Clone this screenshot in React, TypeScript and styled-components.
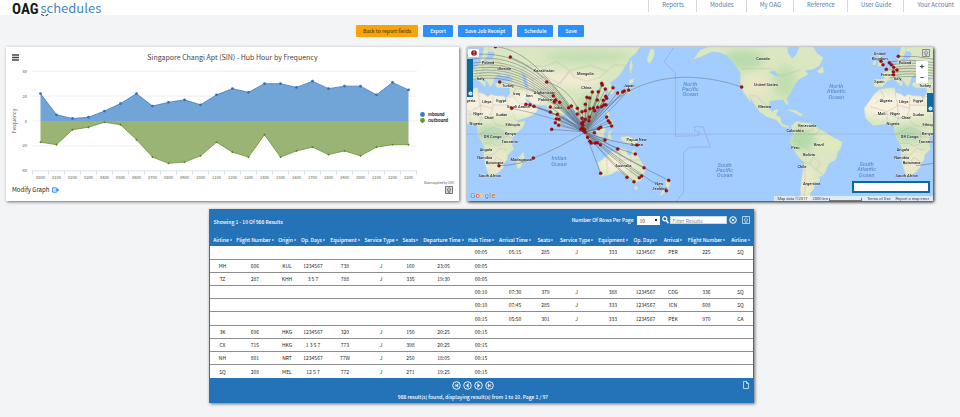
import React from "react";
import styled, { createGlobalStyle, css } from "styled-components";

const GlobalStyle = createGlobalStyle`
  * { box-sizing: border-box; }
  body {
    margin: 0;
    background: #f2f4f6;
    color: #333;
    font-family: "Noto Sans CJK SC", "Noto Sans", sans-serif;
    font-size: 6px;
    line-height: 8px;
  }
  button, input, select { font: inherit; margin: 0; }
`;

/* ---------- header ---------- */

const Header = styled.header`
  display: flex;
  justify-content: space-between;
  height: 15px;
  background: #fff;
`;

const Logo = styled.a`
  position: relative;
  display: flex;
  align-items: flex-start;
  gap: 2px;
  height: 18px;
  padding-left: 12px;
  text-decoration: none;
`;

const Brand = styled.span`
  color: #111c18;
  font: bold 15px/18px "Liberation Sans Narrow", "Roboto Condensed", "DejaVu Sans Condensed", sans-serif;
`;

const Product = styled.span`
  color: #3f86c6;
  font-size: 13px;
  line-height: 15px;
  font-weight: 400;
`;

const LogoMark = styled.svg`
  position: absolute;
  left: 40px;
  top: 14px;
`;

const Nav = styled.nav`
  display: flex;
  height: 12px;
  padding-right: 6px;
`;

const NavLink = styled.a`
  padding: 0 12px 0 13px;
  border-left: 1px solid #d3d6da;
  color: #5878a8;
  font-size: 6px;
  line-height: 9px;
  text-decoration: none;
  white-space: nowrap;
  &:last-child { padding-right: 0; }
`;

/* ---------- toolbar ---------- */

const Toolbar = styled.div`
  display: flex;
  justify-content: center;
  gap: 5px;
  padding: 10px 20px 10px 0;
`;

const ActionButton = styled.button<{ $back?: boolean }>`
  height: 12px;
  padding: 0 7px;
  border: 0;
  border-radius: 1px;
  background: ${(p) => (p.$back ? "#f8a408" : "#2b90fb")};
  color: ${(p) => (p.$back ? "#5a4210" : "#fff")};
  font-size: 5px;
  line-height: 12px;
  font-weight: 500;
  white-space: nowrap;
`;

/* ---------- panels ---------- */

const Panels = styled.main`
  display: grid;
  grid-template-columns: 453fr 466fr;
  gap: 8px;
  padding: 0 27px 0 6px;
`;

const Panel = styled.section`
  position: relative;
  background: #fff;
  box-shadow: 1px 1px 3px rgba(0, 0, 0, 0.55);
`;

const PanelHead = styled.div`
  display: grid;
  grid-template-columns: 7px 1fr 7px;
  align-items: center;
  padding: 3px 6px 0;
  height: 17px;
`;

const IconButton = styled.button`
  display: grid;
  place-items: center;
  padding: 0;
  border: 0;
  background: none;
  color: inherit;
`;

const ChartTitle = styled.h2`
  margin: 0;
  color: #444;
  font-size: 7px;
  line-height: 12px;
  font-weight: 400;
  text-align: center;
`;

const Drawing = styled.svg`
  display: block;
  width: 100%;
`;

const AxisText = styled.text<{ $end?: boolean; $mid?: boolean }>`
  fill: #555;
  font-size: 4px;
  text-anchor: ${(p) => (p.$end ? "end" : p.$mid ? "middle" : "start")};
`;

const LegendText = styled.text`
  fill: #222;
  font-size: 4px;
  font-weight: 700;
`;

const PanelFoot = styled.div`
  display: flex;
  justify-content: space-between;
  align-items: center;
  height: 13px;
  padding: 0 6px 9px;
`;

const ModifyLink = styled.a`
  display: flex;
  align-items: center;
  gap: 3px;
  color: #222;
  font-size: 6px;
  text-decoration: none;
`;

const INBOUND = [22, 5, 2, 3, 8, 14, 22, 12, 15, 17, 13, 21, 26, 23, 30, 30, 27, 32, 26, 28, 28, 21, 31, 25];
const OUTBOUND = [-17, -19, -7, -5, -1, -3, -15, -29, -34, -33, -28, -17, -25, -29, -11, -29, -24, -21, -27, -24, -28, -21, -19, -19];
const px = (i: number) => 34.5 + i * 16;
const py = (v: number) => 57 - v * 1.245;
const line = (d: number[]) => d.map((v, i) => `${px(i)},${py(v)}`).join(" ");

function Chart() {
  return (
    <Drawing viewBox="0 0 453 124" role="img" aria-label="Hub hour by frequency">
      {[40, 20, 0, -20, -40].map((v) => (
        <g key={v}>
          <path d={`M26 ${py(v)}H411`} stroke={v === -40 ? "#c0d0e0" : "#e3e3e3"} strokeWidth=".6" />
          <AxisText $end x="21" y={py(v) + 1.5}>{v}</AxisText>
        </g>
      ))}
      {Array.from({ length: 25 }, (_, i) => (
        <path key={i} d={`M${26.5 + i * 16} 106.800v4`} stroke="#c0d0e0" strokeWidth=".6" />
      ))}
      <polygon points={`${px(0)},${py(0)} ${line(INBOUND)} ${px(23)},${py(0)}`} fill="#72a5d7" />
      <polygon points={`${px(0)},${py(0)} ${line(OUTBOUND)} ${px(23)},${py(0)}`} fill="#99b474" />
      <polyline points={line(INBOUND)} fill="none" stroke="#3f7fc0" strokeWidth=".8" />
      <polyline points={line(OUTBOUND)} fill="none" stroke="#6b963b" strokeWidth=".8" />
      {INBOUND.map((v, i) => (
        <circle key={i} cx={px(i)} cy={py(v)} r="1.4" fill="#3472b4" />
      ))}
      {OUTBOUND.map((v, i) => (
        <path key={i} d={`M${px(i)} ${py(v) - 1.2}l1.200 1.200l-1.200 1.200l-1.200-1.200z`} fill="#587f2a" />
      ))}
      {INBOUND.map((_, i) => (
        <AxisText $mid key={i} x={px(i)} y="115">{`${String(i).padStart(2, "0")}00`}</AxisText>
      ))}
      <AxisText $mid transform="translate(10 57) rotate(-90)">
        <tspan fontSize="5">Frequency</tspan>
      </AxisText>
      <circle cx="416.500" cy="50.500" r="2.400" fill="#3a7cc4" />
      <LegendText x="422" y="52">Inbound</LegendText>
      <circle cx="416.500" cy="56.500" r="2.400" fill="#66972b" />
      <LegendText x="422" y="58">Outbound</LegendText>
      <AxisText $end x="448" y="120">
        <tspan fontSize="3">Data supplied by OAG</tspan>
      </AxisText>
    </Drawing>
  );
}

const ExpandIcon = ({ color = "#555", fill = "#ddd" }: { color?: string; fill?: string }) => (
  <svg width="8" height="8" viewBox="0 0 8 8" aria-hidden="true">
    <path d="M.5.5h7v7h-7z" fill={fill} stroke={color} strokeWidth=".8" />
    <path d="M4 1.500L6 3.800H4.900V6.300H3.100V3.800H2z" fill="none" stroke={color} strokeWidth=".7" />
  </svg>
);

/* ---------- map ---------- */

const MapPanel = styled(Panel)`
  background: #a3ccff;
  overflow: hidden;
`;

const MapShadow = styled.div`
  box-shadow: 1px 1px 3px rgba(0, 0, 0, 0.55);
  display: grid;
`;

const Country = styled.text`
  fill: #222;
  stroke: #fff;
  stroke-width: 2px;
  stroke-opacity: 0.5;
  paint-order: stroke;
  font: 500 12px "Roboto", sans-serif;
  text-anchor: middle;
`;

const Ocean = styled.text`
  fill: #5c8fd0;
  font: italic 500 17px "Roboto", sans-serif;
  text-anchor: middle;
`;

const overlay = css`
  position: absolute;
  z-index: 1;
`;

const AlertBadge = styled.button`
  ${overlay}
  top: 2px;
  left: 1px;
  display: grid;
  place-items: center;
  width: 11px;
  height: 8px;
  padding: 0;
  border: 0;
  border-radius: 1px;
  background: #fff;
`;

const SideTab = styled.button<{ $right?: boolean }>`
  ${overlay}
  ${(p) => (p.$right ? "right: 0; top: 46px; height: 19px;" : "left: 0; top: 12px; height: 38px;")}
  display: flex;
  align-items: flex-end;
  justify-content: center;
  width: 6px;
  padding: 0 0 1px;
  border: 0;
  background: #0b6a9f;
`;

const MapExpand = styled(IconButton)`
  ${overlay}
  top: 2px;
  right: 3px;
`;

const ZoomBox = styled.div`
  ${overlay}
  top: 14px;
  right: 5px;
  display: grid;
  border-radius: 1px;
  background: #fff;
`;

const ZoomButton = styled.button`
  width: 12px;
  height: 11px;
  padding: 0;
  border: 0;
  background: none;
  color: #444;
  font: bold 8px/11px "Roboto", sans-serif;
`;

const MapSearch = styled.input`
  ${overlay}
  right: 3px;
  bottom: 8px;
  width: 78px;
  height: 12px;
  border: 1px solid #0b6a9f;
  outline: 1px solid #0b6a9f;
  outline-offset: -2px;
  background: #fff;
`;

const Google = styled.a`
  ${overlay}
  left: 3px;
  bottom: 0;
  font: 500 8px/11px "Roboto", sans-serif;
  text-decoration: none;
  text-shadow: 0 0 1px #fff, 0 0 1px #fff;
`;

const Letter = styled.span<{ $c: string }>`
  color: ${(p) => p.$c};
`;

const Credits = styled.div`
  ${overlay}
  right: 0;
  bottom: 0;
  display: flex;
  gap: 5px;
  height: 5px;
  padding: 0 4px 0 3px;
  background: rgba(245, 245, 245, 0.75);
  color: #444;
  font: 4px/5px "Roboto", sans-serif;
  a { color: inherit; text-decoration: none; }
`;

const Scale = styled.span`
  display: flex;
  align-items: flex-end;
  gap: 1px;
  &::after {
    content: "";
    width: 31px;
    height: 2px;
    border: 1px solid #777;
    border-top: 0;
  }
`;

const AFRICA = "M-6 160L9 148L30 144L54 143L56 158L70 161L84 171L92 163L110 168L132 168L139 178L144 195L155 212L165 235L174 247L197 243L190 262L172 278L158 293L155 307L161 328L143 345L141 360L132 368L129 383L113 399L92 410L86 405L78 380L71 345L74 325L67 310L54 285L51 258L38 257L29 252L-11 257L-35 235L-38 205Z";
const EUROPE = "M-10 118L22 116L17 100L33 93L45 80L60 70L62 52L68 47L74 63L96 58L104 42L98 34L88 36L84 21L540 21L528 40L512 52L498 76L483 100L466 118L450 128L462 152L456 163L447 160L442 146L430 143L438 164L436 185L420 200L402 207L398 214L406 228L403 240L390 250L384 238L376 233L374 246L384 264L388 278L378 274L368 256L362 240L352 238L346 212L334 207L318 218L303 232L300 250L293 257L283 235L277 214L262 205L258 196L240 195L222 192L206 182L196 172L199 184L212 196L226 195L236 204L226 220L206 231L168 243L162 226L150 205L142 184L140 171L150 162L148 144L130 144L112 143L104 131L118 124L150 124L160 118L146 107L130 108L116 103L104 112L100 128L92 142L80 124L66 110L62 112L78 128L75 140L66 132L50 116L38 120L30 124L18 140L0 142L-10 138Z";
const NAMERICA = "M720 30L745 21L1060 21L1072 40L1090 53L1078 78L1060 88L1036 92L1045 102L1033 110L1018 118L1004 133L995 152L981 175L986 193L979 194L970 180L952 180L930 184L926 201L935 215L950 207L955 210L948 226L962 232L964 250L982 258L992 259L982 265L965 258L948 240L920 230L898 215L880 188L870 172L874 190L862 174L848 152L840 125L842 100L822 70L804 48L780 38L756 35L720 52L700 58Z";
const SAMERICA = "M993 258L1009 243L1022 246L1040 248L1064 254L1078 268L1096 276L1116 290L1147 306L1143 322L1133 338L1129 357L1106 372L1098 393L1088 408L1078 410L1080 424L1063 432L1062 447L1050 460L1054 483L1022 483L1022 440L1027 405L1032 368L1012 347L1001 327L990 306L993 292L1000 282Z";
const AUSTRALIA = "M412 368L428 358L440 347L457 333L472 337L482 324L500 328L502 342L512 348L520 326L529 341L540 358L553 380L556 394L548 410L542 424L525 427L510 418L500 410L492 398L470 392L452 404L434 407L420 410L420 392Z";
const ISLANDS = "M190 335L194 350L184 382L173 387L168 372L174 354ZM360 262L372 270L394 294L396 303L382 294ZM398 303L430 308L428 313L400 309ZM408 273L428 262L438 257L436 272L430 292L414 290ZM444 276L460 270L450 282L456 298L444 296ZM438 213L447 215L448 235L458 243L460 262L450 257L440 232ZM482 290L505 288L530 300L538 316L520 314L496 308L484 300ZM470 161L484 154L500 152L508 138L514 150L508 160L484 165ZM507 120L523 115L518 130L507 132ZM560 60L572 25L584 30L582 50L568 72ZM508 80L514 55L518 75L512 105ZM522 440L534 440L530 450L524 450ZM619 414L628 427L632 432L624 446L616 438ZM614 445L620 450L606 466L598 466ZM300 250L306 258L302 264ZM417 188L423 192L416 198ZM438 190L443 193L440 203ZM1 80L15 78L22 70L10 55L12 40L3 42L6 58ZM-12 65L-3 62L-4 75L-14 75ZM64 55L72 20L90 21L80 52L70 60ZM980 208L1005 210L1022 220L1030 226L1020 228L1000 217ZM1070 95L1088 78L1092 96L1082 101Z";

const BORDERS = "M9 148L22 170L-6 190M54 143L56 170L62 197L30 215L-20 200M59 195L98 205L98 170M98 195L145 196M30 215L30 245M62 197L64 235L54 258M64 235L90 230L98 205M90 230L110 255L150 262M-10 225L30 222L66 236M54 285L100 262L130 275L132 310L110 318L96 310L67 310M132 290L158 293M74 345L100 345L118 325L140 330M78 372L96 372L110 352L132 366M140 171L160 168L178 192L200 190M160 168L166 145L200 148L208 186M166 145L150 128M200 148L224 150L248 145L240 195M224 150L216 116L180 98M248 145L276 155L262 190M216 116L260 112L300 130L330 92L350 86L390 76L440 94L462 75L500 76M330 92L340 110L380 124L420 112L440 94M330 92L276 155M276 155L290 182L330 200L350 196L366 214L390 210L402 207M366 214L372 235M180 98L200 75L250 80L290 65L330 92M40 84L60 100L95 95L115 100M65 70L70 88L95 80L98 62M95 80L130 88L150 105M96 58L120 65L130 88M70 88L60 100L62 110M842 86L932 86L950 100L970 108L1000 96L1022 90M866 166L890 168L908 188L926 201M440 347L442 402M480 325L480 395M482 360L545 360M512 348V396L550 408M1020 248L1024 276L1000 292M1024 276L1050 272L1062 262M1080 268L1070 282L1044 284M1000 330L1020 312L1012 298M1020 312L1048 330L1060 352L1050 372L1030 366M1060 352L1080 368L1070 390L1090 405M1034 372L1036 430L1032 480M1050 372L1070 390";

const HUB: [number, number] = [375, 276];
const DOTS: number[][] = [
  [151, 51], [119, 126], [155, 205], [198, 193], [210, 194], [222, 199], [260, 126], [106, 20], [220, 354], [117, 377], [275, 268], [280, 167], [287, 180], [299, 187], [283, 186], [271, 201], [271, 216], [292, 223], [289, 236], [286, 248], [296, 256], [297, 238], [326, 203], [334, 198], [352, 205], [352, 222], [376, 193], [381, 172], [389, 174], [397, 156], [415, 155], [425, 130], [427, 135], [436, 147], [459, 143], [473, 159], [488, 156], [493, 153], [506, 150], [366, 215], [376, 212], [376, 238], [388, 231], [390, 206], [400, 204], [413, 202], [412, 180], [404, 212], [430, 181], [437, 169], [440, 175], [438, 194], [432, 195], [425, 200], [366, 235], [365, 250], [370, 245], [369, 255], [363, 268], [367, 264], [373, 268], [387, 242], [440, 231], [445, 242], [450, 248], [455, 258], [416, 266], [422, 262], [403, 278], [383, 292], [390, 304], [394, 309], [405, 309], [412, 308], [421, 314], [435, 300], [473, 327], [422, 400], [501, 412], [522, 425], [531, 315], [526, 342], [552, 383], [545, 408], [538, 413], [626, 421], [619, 452],
];
const WEST = [36, 48, 60, 68, 76, 84, 92, 100, 108];
const EUROPE_DOTS = [[1263, 64], [1269, 74], [1288, 68], [1294, 74], [1301, 82], [1279, 88], [1300, 95], [1301, 104], [1311, 90], [1315, 49]];
const TINTS = ["#55606a", "#4f6675", "#6c6c58", "#5b5367", "#4b6a5a"];

const COUNTRIES: [string, number, number][] = [
  ["Poland", 84, 71], ["Ukraine", 133, 90], ["Kazakhstan", 252, 97], ["Mongolia", 376, 104], ["China", 379, 147], ["Italy", 62, 120], ["Turkey", 144, 140], ["Iraq", 170, 165], ["Iran", 208, 171], ["Afghanistan", 254, 161], ["Pakistan", 258, 183], ["India", 294, 207], ["Saudi Arabia", 175, 203], ["Egypt", 124, 185], ["Libya", 80, 190], ["Niger", 54, 225], ["Chad", 87, 238], ["Sudan", 125, 228], ["Nigeria", 48, 255], ["Ethiopia", 158, 257], ["Kenya", 151, 286], ["DR Congo", 98, 294], ["Tanzania", 149, 309], ["Angola", 78, 333], ["Namibia", 74, 357], ["Botswana", 104, 372], ["Madagascar", 185, 363], ["South Africa", 89, 412], ["Japan", 507, 140], ["Papua New", 530, 304], ["Guinea", 530, 317], ["Australia", 490, 380], ["New", 598, 436], ["Zealand", 598, 449], ["Canada", 909, 61], ["United States", 918, 139], ["Mexico", 914, 203], ["Venezuela", 1041, 261], ["Colombia", 1005, 275], ["Brazil", 1077, 318], ["Peru", 1006, 327], ["Bolivia", 1047, 347], ["Chile", 1026, 385], ["Argentina", 1055, 436], ["United", 1259, 46], ["Kingdom", 1259, 59], ["France", 1281, 107], ["Spain", 1258, 129], ["Algeria", 27, 187], ["Algeria", 1278, 187], ["Mali", 1265, 225],
];
const WRAPPED = new Set(["Poland", "Italy", "Egypt", "Libya", "Niger", "Chad", "Sudan", "Nigeria", "Ethiopia", "Kenya", "DR Congo", "Tanzania", "Angola", "Namibia", "Botswana", "South Africa", "Turkey"]);
const OCEANS: [string[], number, number][] = [
  [["Indian", "Ocean"], 297, 361], [["North", "Pacific", "Ocean"], 691, 137], [["South", "Pacific", "Ocean"], 794, 380], [["North", "Atlantic", "Ocean"], 1129, 144], [["South", "Atlantic", "Ocean"], 1220, 378],
];

function WorldMap() {
  return (
    <Drawing viewBox="21 21 1398 462" role="img" aria-label="Route map from Singapore">
      <defs>
        <clipPath id="land">
          <path d={AFRICA + EUROPE + NAMERICA + SAMERICA + AUSTRALIA + ISLANDS} />
          <path d={AFRICA + EUROPE + ISLANDS} transform="translate(1251 0)" />
        </clipPath>
        <filter id="soft" x="-50%" y="-50%" width="200%" height="200%">
          <feGaussianBlur stdDeviation="11" />
        </filter>
      </defs>
      <g fill="#dbe7c2" stroke="#b9d3c6" strokeWidth="1">
        <path d={NAMERICA + SAMERICA + AUSTRALIA + ISLANDS + AFRICA + EUROPE} />
        <path d={AFRICA + EUROPE + ISLANDS} transform="translate(1251 0)" />
      </g>
      <g clipPath="url(#land)">
        <g filter="url(#soft)">
          {[0, 1251].map((dx) => (
            <g key={dx} transform={`translate(${dx} 0)`}>
              <ellipse cx="50" cy="195" rx="110" ry="42" fill="#f7f0dd" />
              <ellipse cx="190" cy="190" rx="60" ry="38" fill="#f7f0dd" />
              <ellipse cx="90" cy="282" rx="45" ry="24" fill="#b5dab0" />
              <ellipse cx="110" cy="365" rx="40" ry="35" fill="#ebe8cc" />
            </g>
          ))}
          <ellipse cx="270" cy="120" rx="90" ry="24" fill="#eeead0" />
          <ellipse cx="360" cy="120" rx="60" ry="18" fill="#f2ecd4" />
          <ellipse cx="380" cy="50" rx="130" ry="20" fill="#c3dfb5" />
          <ellipse cx="400" cy="195" rx="45" ry="34" fill="#bfddaa" />
          <ellipse cx="470" cy="372" rx="55" ry="28" fill="#f5eed7" />
          <ellipse cx="850" cy="60" rx="60" ry="30" fill="#b9dcae" />
          <ellipse cx="890" cy="135" rx="42" ry="36" fill="#e9e6c6" />
          <ellipse cx="975" cy="125" rx="35" ry="50" fill="#c2dfb0" />
          <ellipse cx="1025" cy="300" rx="40" ry="30" fill="#b2dba9" />
          <ellipse cx="1110" cy="310" rx="35" ry="24" fill="#dfe9be" />
          <ellipse cx="1040" cy="430" rx="22" ry="50" fill="#ece8c9" />
        </g>
        <g fill="none" stroke="#b5b5a6" strokeWidth="1.300">
          <path d={BORDERS} />
          <path d={BORDERS} transform="translate(1251 0)" />
        </g>
      </g>
      <path
        d="M185 100L196 104L200 122L206 140L196 142L190 124ZM926 96L944 92L952 104L962 112L946 108ZM982 21L1018 21L1008 44L996 56L984 38ZM142 279L150 279L148 289L141 288Z"
        fill="#a3ccff"
      />
      <g fill="none" stroke="#8d88b8" strokeWidth="1.600">
        <path d="M21 282H1422" strokeDasharray="5 3" />
        <path d="M640 24L612 66L646 98V289L716 287L718 277L704 271L704 260L729 260L751 321L690 321L671 337V457L650 483" strokeDasharray="4 2" />
      </g>
      <g fill="none" strokeWidth="1.700" opacity=".8">
        {DOTS.filter(([x, y]) => !(x === 117 && y === 377) && x !== 106).map(([x, y], i) => {
          const lift = x < 270 ? (y < 150 ? -50 : -10) : x > 500 ? 12 : 0;
          const pull = x < 270 && y < 150 ? 36 : x < 270 && y < 300 ? 20 : 0;
          return (
            <path
              key={i}
              d={`M${HUB[0]} ${HUB[1]}Q${(HUB[0] + x) / 2 + pull} ${(HUB[1] + y) / 2 + (y === 354 ? 10 : lift)} ${x} ${y}`}
              stroke={TINTS[i % TINTS.length]}
            />
          );
        })}
        {WEST.map((y, i) => (
          <path key={y} d={`M21 ${y + 12}C${130 + i * 3} ${y - 10} ${256 - i * 3} ${66 + i * 9} ${HUB[0]} ${HUB[1]}`} stroke={TINTS[i % TINTS.length]} />
        ))}
        {WEST.slice(2).map((y, i) => (
          <path key={y} d={`M${1288 + (i % 3) * 9} ${y + 6}Q1350 ${y - 4} 1422 ${y + 8}`} stroke={TINTS[i % TINTS.length]} />
        ))}
        <path d="M106 20C190 28 270 100 375 276M1315 49Q1370 46 1422 58M117 377Q180 375 220 354M1368 377L1422 370" stroke="#55606a" />
        <path d="M375 276C410 225 440 195 480 170C600 90 740 105 845 141" stroke="#666b70" />
      </g>
      <g>
        {COUNTRIES.map(([name, x, y]) => (
          <React.Fragment key={name + x}>
            <Country x={x} y={y}>{name}</Country>
            {WRAPPED.has(name) && <Country x={x + 1251} y={y}>{name}</Country>}
          </React.Fragment>
        ))}
        {OCEANS.map(([words, x, y]) => (
          <Ocean key={words[0] + x}>
            {words.map((w, i) => (
              <tspan key={w} x={x} y={y + i * 16}>{w}</tspan>
            ))}
          </Ocean>
        ))}
      </g>
      <g fill="#a80812" stroke="#5e0a10" strokeWidth="1">
        {[...DOTS, ...EUROPE_DOTS, [845, 141], [375, 277], [371, 272]].map(([x, y], i) => (
          <circle key={i} cx={x} cy={y} r="4.600" />
        ))}
      </g>
    </Drawing>
  );
}

const TabDot = () => (
  <svg width="5" height="5" viewBox="0 0 5 5" aria-hidden="true">
    <circle cx="2.500" cy="2.500" r="2" fill="#fff" />
    <path d="M2 1.500L3 2.500L2 3.500" fill="none" stroke="#0b6a9f" strokeWidth=".6" />
  </svg>
);

/* ---------- results ---------- */

const ResultsArea = styled.div`
  display: grid;
  grid-template-columns: 210fr 544fr 206fr;
  padding: 8px 0 14px;
`;

const Results = styled.section`
  grid-column: 2;
  background: #2472b7;
  border: 1px solid #2472b7;
  border-width: 0 1px;
  box-shadow: 1px 1px 3px rgba(0, 0, 0, 0.55);
`;

const ResultsBar = styled.div`
  display: flex;
  align-items: center;
  justify-content: space-between;
  height: 24px;
  padding: 0 3px 2px 3px;
  color: #fff;
  font-size: 5px;
  font-weight: 500;
`;

const Filters = styled.div`
  display: flex;
  align-items: center;
  gap: 2px;
`;

const FilterGroup = styled.label`
  display: flex;
  align-items: center;
  gap: 1px;
`;

const RowsSelect = styled.select`
  width: 23px;
  height: 9px;
  margin-left: 3px;
  padding: 0 0 0 2px;
  border: 0;
  border-radius: 0;
  appearance: none;
  background: linear-gradient(#222, #222) right 3px center / 2px 2px no-repeat #fff;
  color: #444;
  font-weight: 400;
  font-size: 5px;
  line-height: 9px;
`;

const FilterInput = styled.input`
  width: 57px;
  height: 8px;
  padding: 0 1px;
  border: 1px solid #c9d6e2;
  background: #fff;
  font-size: 5px;
  line-height: 6px;
  font-weight: 400;
  &::placeholder { color: #8a8a8a; }
`;

const Summary = styled.span`
  padding-top: 4px;
`;

const Actions = styled.div`
  display: flex;
  gap: 5px;
`;

const Table = styled.table`
  width: 100%;
  height: 145px;
  table-layout: fixed;
  border-collapse: collapse;
`;

const HeadCell = styled.th`
  height: 13px;
  padding: 0;
  color: #fff;
  font-size: 5px;
  line-height: 8px;
  font-weight: 500;
  white-space: nowrap;
`;

const SortMark = styled.svg`
  display: inline-block;
  width: 2px;
  height: 4px;
  margin-left: 1px;
`;

const Row = styled.tr`
  background: #fff;
  border-bottom: 1px solid #8e8e8e;
  &:last-child { border-bottom: 0; }
`;

const Cell = styled.td`
  height: 13px;
  padding: 0;
  color: #222;
  font-size: 5px;
  line-height: 8px;
  text-align: center;
  white-space: nowrap;
`;

const ResultsFoot = styled.div`
  display: grid;
  grid-template-columns: 1fr auto 1fr;
  align-items: start;
  height: 25px;
  padding: 3px 4px 0 0;
  color: #fff;
  font-size: 5px;
  font-weight: 500;
  text-align: center;
`;

const FootCenter = styled.div`
  padding-right: 14px;
`;

const Pager = styled.div`
  display: flex;
  justify-content: center;
  gap: 2px;
  margin-bottom: 3px;
`;

const ExportFile = styled(IconButton)`
  justify-self: end;
`;

const COLUMNS: [string, number][] = [
  ["Airline", 24], ["Flight Number", 41], ["Origin", 23], ["Op. Days", 29], ["Equipment", 35], ["Service Type", 37], ["Seats", 22], ["Departure Time", 44], ["Hub Time", 31], ["Arrival Time", 37], ["Seats", 24], ["Service Type", 38], ["Equipment", 35], ["Op. Days", 30], ["Arrival", 25], ["Flight Number", 42], ["Airline", 26],
];
const arrive = (...v: string[]) => [...Array(8).fill(""), ...v];
const depart = (...v: string[]) => [...v, ...Array(8).fill("")];
const ROWS: string[][] = [
  arrive("00:05", "05:15", "285", "J", "333", "1234567", "PER", "225", "SQ"),
  depart("MH", "606", "KUL", "1234567", "738", "J", "160", "23:05", "00:05"),
  depart("TZ", "287", "KHH", "3 5 7", "788", "J", "335", "19:30", "00:05"),
  arrive("00:10", "07:30", "379", "J", "388", "1234567", "CDG", "336", "SQ"),
  arrive("00:10", "07:45", "285", "J", "333", "1234567", "ICN", "608", "SQ"),
  arrive("00:15", "05:50", "301", "J", "333", "1234567", "PEK", "970", "CA"),
  depart("3K", "696", "HKG", "1234567", "320", "J", "150", "20:25", "00:15"),
  depart("CX", "715", "HKG", "1 3 5 7", "773", "J", "398", "20:25", "00:15"),
  depart("NH", "801", "NRT", "1234567", "77W", "J", "250", "18:05", "00:15"),
  depart("SQ", "208", "MEL", "12 5 7", "772", "J", "271", "19:25", "00:15"),
];
const PAGES: [string, string][] = [
  ["First page", "M3.300 3v3M5.800 2.700L4 4.500L5.800 6.300z"],
  ["Previous page", "M5.300 2.500L3.300 4.500L5.300 6.500z"],
  ["Next page", "M3.700 2.500L5.700 4.500L3.700 6.500z"],
  ["Last page", "M5.700 3v3M3.200 2.700L5 4.500L3.200 6.300z"],
];

export default function App() {
  return (
    <>
      <GlobalStyle />
      <Header>
        <Logo href="#" aria-label="OAG schedules">
          <Brand>OAG</Brand>
          <Product>schedules</Product>
          <LogoMark width="10" height="2" viewBox="0 0 10 2" aria-hidden="true">
            <path d="M1 0L4 2M8.500 0L5.500 2" stroke="#222" strokeWidth="1" />
          </LogoMark>
        </Logo>
        <Nav>
          {["Reports", "Modules", "My OAG", "Reference", "User Guide", "Your Account"].map((t) => (
            <NavLink href="#" key={t}>{t}</NavLink>
          ))}
        </Nav>
      </Header>

      <Toolbar>
        <ActionButton $back>Back to report fields</ActionButton>
        {["Export", "Save Job Receipt", "Schedule", "Save"].map((t) => (
          <ActionButton key={t}>{t}</ActionButton>
        ))}
      </Toolbar>

      <Panels>
        <Panel>
          <PanelHead>
            <IconButton aria-label="Chart menu">
              <svg width="7" height="7" viewBox="0 0 7 7"><path d="M0 1h7M0 3.500h7M0 6h7" stroke="#444" strokeWidth="1.300" /></svg>
            </IconButton>
            <ChartTitle>Singapore Changi Apt (SIN) - Hub Hour by Frequency</ChartTitle>
          </PanelHead>
          <Chart />
          <PanelFoot>
            <ModifyLink href="#">
              Modify Graph
              <svg width="7" height="6" viewBox="0 0 7 6" aria-hidden="true">
                <path d="M4.500 .8H.6V5.200H4.500" fill="none" stroke="#2b90fb" />
                <path d="M2 3h2.500M4.500 1.200L7 3L4.500 4.800z" fill="#2b90fb" stroke="#2b90fb" strokeWidth=".6" />
              </svg>
            </ModifyLink>
            <IconButton aria-label="Expand chart"><ExpandIcon /></IconButton>
          </PanelFoot>
        </Panel>

        <MapShadow>
          <MapPanel>
            <WorldMap />
            <AlertBadge aria-label="Map alert">
              <svg width="6" height="6" viewBox="0 0 6 6">
                <circle cx="3" cy="3" r="2.800" fill="#a01018" />
                <path d="M3 1.300v2M3 4v.8" stroke="#fff" strokeWidth=".8" />
              </svg>
            </AlertBadge>
            <SideTab aria-label="Open left drawer"><TabDot /></SideTab>
            <SideTab $right aria-label="Open right drawer"><TabDot /></SideTab>
            <MapExpand aria-label="Expand map"><ExpandIcon color="#777" /></MapExpand>
            <ZoomBox>
              <ZoomButton aria-label="Zoom in">+</ZoomButton>
              <ZoomButton aria-label="Zoom out">−</ZoomButton>
            </ZoomBox>
            <MapSearch aria-label="Map details" />
            <Google href="#">
              {[["G", "#4285f4"], ["o", "#ea4335"], ["o", "#f4b400"], ["g", "#4285f4"], ["l", "#34a853"], ["e", "#ea4335"]].map(([l, c], i) => (
                <Letter key={i} $c={c}>{l}</Letter>
              ))}
            </Google>
            <Credits>
              <span>Map data ©2017</span>
              <Scale>2000 km</Scale>
              <a href="#">Terms of Use</a>
              <a href="#">Report a map error</a>
            </Credits>
          </MapPanel>
        </MapShadow>
      </Panels>

      <ResultsArea>
        <Results>
          <ResultsBar>
            <Summary>Showing 1 - 10 Of 966 Results</Summary>
            <Filters>
              <FilterGroup>
                Number Of Rows Per Page
                <RowsSelect defaultValue="10"><option>10</option><option>25</option></RowsSelect>
              </FilterGroup>
              <FilterGroup>
                <svg width="7" height="8" viewBox="0 0 7 8" aria-hidden="true">
                  <circle cx="2.800" cy="2.800" r="2.100" fill="none" stroke="#fff" strokeWidth="1.200" />
                  <path d="M4.300 4.500L6.500 7.200" stroke="#fff" strokeWidth="1.400" />
                </svg>
                <FilterInput placeholder="Filter Results" aria-label="Filter results" />
              </FilterGroup>
              <Actions>
                <IconButton aria-label="Clear filter">
                  <svg width="8" height="8" viewBox="0 0 8 8">
                    <circle cx="4" cy="4" r="3.300" fill="none" stroke="#fff" />
                    <path d="M2.600 2.600L5.400 5.400M5.400 2.600L2.600 5.400" stroke="#fff" />
                  </svg>
                </IconButton>
                <IconButton aria-label="Expand results"><ExpandIcon color="#d5e6f5" fill="none" /></IconButton>
              </Actions>
            </Filters>
          </ResultsBar>
          <Table>
            <colgroup>
              {COLUMNS.map(([, w], i) => <col key={i} width={w} />)}
            </colgroup>
            <thead>
              <tr>
                {COLUMNS.map(([name], i) => (
                  <HeadCell key={i} scope="col">
                    {name}
                    <SortMark viewBox="0 0 3 4" aria-hidden="true"><path d="M1.500 0L3 1.700H0zM1.500 4L3 2.300H0z" fill="#fff" /></SortMark>
                  </HeadCell>
                ))}
              </tr>
            </thead>
            <tbody>
              {ROWS.map((r, i) => (
                <Row key={i}>{r.map((c, j) => <Cell key={j}>{c}</Cell>)}</Row>
              ))}
            </tbody>
          </Table>
          <ResultsFoot>
            <span />
            <FootCenter>
              <Pager>
                {PAGES.map(([label, d]) => (
                  <IconButton key={label} aria-label={label}>
                    <svg width="9" height="9" viewBox="0 0 9 9">
                      <circle cx="4.500" cy="4.500" r="3.800" fill="none" stroke="#fff" strokeWidth=".9" />
                      <path d={d} fill="#fff" stroke="#fff" strokeWidth=".5" />
                    </svg>
                  </IconButton>
                ))}
              </Pager>
              966 result(s) found, displaying result(s) from 1 to 10. Page 1 / 97
            </FootCenter>
            <ExportFile aria-label="Export file">
              <svg width="6" height="8" viewBox="0 0 6 8"><path d="M.5.500H3.500L5.500 2.500V7.500H.5zM3.500.500V2.500H5.500" fill="none" stroke="#fff" strokeWidth=".7" /></svg>
            </ExportFile>
          </ResultsFoot>
        </Results>
      </ResultsArea>
    </>
  );
}
